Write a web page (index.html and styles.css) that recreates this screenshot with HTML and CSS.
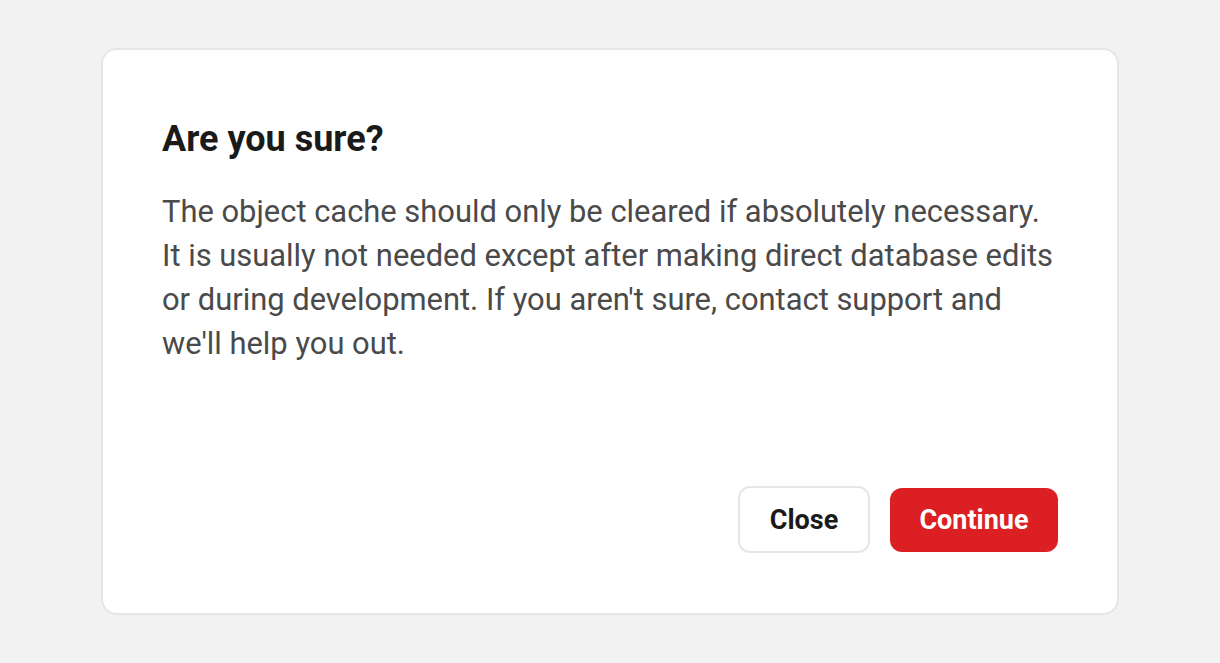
FILE: index.html
```html
<!DOCTYPE html>
<html>
<head>
<meta charset="utf-8">
<link rel="stylesheet" href="styles.css">
</head>
<body>
<div class="page">
  <div class="dialog">
    <h1 class="title">Are you sure?</h1>
    <p class="text">The object cache should only be cleared if absolutely necessary. It is usually not needed except after making direct database edits or during development. If you aren't sure, contact support and we'll help you out.</p>
    <div class="actions">
      <button class="btn btn-close">Close</button>
      <button class="btn btn-continue">Continue</button>
    </div>
  </div>
</div>
</body>
</html>
```
FILE: styles.css
```css
html, body {
  margin: 0;
  padding: 0;
  background: #f2f2f2;
  font-family: Roboto, "Liberation Sans", sans-serif;
}
.page {
  padding: 48px 101px 0 101px;
}
.dialog {
  box-sizing: border-box;
  width: 1018px;
  height: 567px;
  background: #fff;
  border: 2px solid #e6e6e6;
  border-radius: 16px;
  padding: 60px 59px 60px 59px;
  display: flex;
  flex-direction: column;
}
.title {
  margin: 7px 0 0 0;
  font-size: 36px;
  font-weight: 700;
  line-height: 44px;
  color: #1a1a1a;
}
.text {
  margin: 29px 0 0 0;
  font-size: 30.9px;
  line-height: 44px;
  color: #4a4a4a;
}
.actions {
  margin-top: auto;
  display: flex;
  justify-content: flex-end;
  align-items: center;
  gap: 20px;
}
.btn {
  font-family: Roboto, "Liberation Sans", sans-serif;
  font-weight: 700;
  font-size: 27px;
  border-radius: 12px;
  cursor: pointer;
  padding: 0;
}
.btn-close {
  width: 132px;
  height: 67px;
  background: #fff;
  color: #1a1a1a;
  border: 2px solid #e6e6e6;
}
.btn-continue {
  width: 168px;
  height: 64px;
  background: #dc1f22;
  color: #fff;
  border: none;
}
```
